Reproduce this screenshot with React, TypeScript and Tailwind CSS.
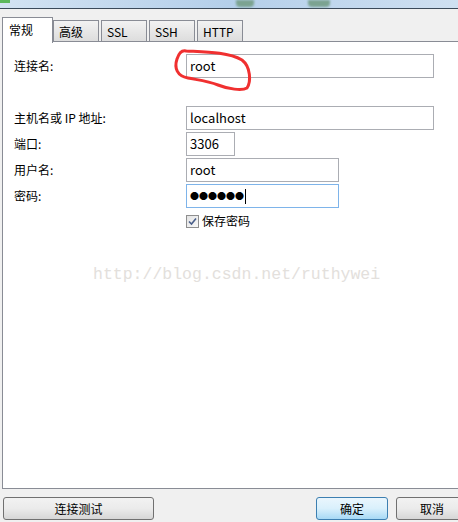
const fieldCls =
  "h-[24px] border border-[#abadb3] bg-white px-[3px] flex items-center text-[13px] text-black";

const Row = ({ label, width, children }: { label: string; width: string; children: React.ReactNode }) => (
  <div className="flex items-center">
    <span className="w-[172px] text-[12px] text-black">{label}</span>
    <div className={fieldCls + " " + width}>{children}</div>
  </div>
);

const Tab = ({ label, active = false }: { label: string; active?: boolean }) =>
  active ? (
    <div className="h-[26px] w-[51px] -mb-px bg-white border border-b-0 border-[#898c95] pl-[6px] pt-[3px] text-[12px] text-black z-10">
      {label}
    </div>
  ) : (
    <div className="h-[22px] w-[46px] mr-[2px] border border-b-0 border-[#898c95] bg-gradient-to-b from-[#f2f2f2] to-[#dcdcdc] pl-[5px] pt-[2px] text-[12px] text-black">
      {label}
    </div>
  );

const Button = ({ label, className = "" }: { label: string; className?: string }) => (
  <div
    className={
      "h-[23px] shrink-0 rounded-[3px] border flex items-center justify-center text-[12px] text-black " + className
    }
  >
    {label}
  </div>
);

export default function App() {
  return (
    <div
      className="relative w-[458px] h-[522px] overflow-hidden bg-[#f0f0f0] flex flex-col"
      style={{ fontFamily: '"Noto Sans CJK SC", "Liberation Sans", sans-serif' }}
    >
      {/* window chrome glimpse */}
      <div className="h-[8px] bg-gradient-to-r from-[#d3e3f2] via-[#b4cfea] to-[#cfe0f1] relative">
        <div className="absolute left-0 top-0 w-[10px] h-[3px] bg-[#5cb85c]" />
        <div className="absolute left-[236px] top-0 w-[18px] h-[7px] rounded-b-[4px] bg-[#7ba391] blur-[1px]" />
        <div className="absolute left-[308px] top-0 w-[22px] h-[7px] rounded-b-[4px] bg-[#7ba391] blur-[1px]" />
      </div>
      <div className="h-px bg-[#3b4a5a]" />

      {/* tabs */}
      <div className="flex items-end pl-[2px] mt-[8px] relative">
        <Tab label="常规" active />
        <Tab label="高级" />
        <Tab label="SSL" />
        <Tab label="SSH" />
        <Tab label="HTTP" />
        <div className="absolute left-[2px] right-0 bottom-0 h-px bg-[#898c95]" />
      </div>

      {/* panel */}
      <div className="ml-[2px] mr-[-4px] h-[447px] bg-white border border-t-0 border-[#898c95] pl-[11px] pt-[12px] flex flex-col">
        <Row label="连接名:" width="w-[248px]">root</Row>

        <div className="mt-[28px] flex flex-col gap-[2px]">
          <Row label="主机名或 IP 地址:" width="w-[248px]">localhost</Row>
          <Row label="端口:" width="w-[49px]">3306</Row>
          <Row label="用户名:" width="w-[153px]">root</Row>
          <div className="flex items-center">
            <span className="w-[172px] text-[12px] text-black">密码:</span>
            <div className="h-[24px] w-[153px] border border-[#7eb4ea] bg-white px-[3px] flex items-center text-black">
              <span className="text-[9px] tracking-[0px]">●●●●●●</span>
              <span className="ml-[1px] w-px h-[15px] bg-black" />
            </div>
          </div>
        </div>

        <div className="flex items-center mt-[4px] ml-[172px]">
          <div className="w-[13px] h-[13px] border border-[#8f8f8f] bg-gradient-to-br from-[#e4e4e4] to-[#f8f8f8] flex items-center justify-center">
            <svg width="9" height="9" viewBox="0 0 9 9">
              <path d="M1 4.5 L3.5 7 L8 1.5" fill="none" stroke="#4a5f8a" strokeWidth="1.6" />
            </svg>
          </div>
          <span className="ml-[3px] text-[12px] text-black">保存密码</span>
        </div>

        <div
          className="mt-[33px] ml-[79px] text-[16.5px] text-[#e3e0dc]"
          style={{ fontFamily: '"Liberation Mono", monospace' }}
        >
          http://blog.csdn.net/ruthywei
        </div>
      </div>

      {/* buttons */}
      <div className="flex items-center mt-[8px] pl-[3px]">
        <Button label="连接测试" className="w-[151px] border-[#707070] bg-gradient-to-b from-[#f2f2f2] via-[#ebebeb] to-[#d6d6d6]" />
        <Button label="确定" className="ml-[162px] w-[72px] border-[#3c7fb1] bg-gradient-to-b from-[#eaf6fd] via-[#d9f0fc] to-[#a7d9f5]" />
        <Button label="取消" className="ml-[8px] w-[72px] border-[#707070] bg-gradient-to-b from-[#f2f2f2] via-[#ebebeb] to-[#d6d6d6]" />
      </div>

      {/* hand-drawn red circle */}
      <svg className="absolute left-0 top-0 pointer-events-none" width="458" height="522">
        <path
          d="M186 51 C205 52 228 52 242 60 C251 67 251 82 247 88 C242 91 228 89 218 85 C208 81 198 80 188 78 C177 76 174 68 177 59 C179 53 182 50 186 51"
          fill="none"
          stroke="#f03030"
          strokeWidth="3"
          strokeLinecap="round"
        />
      </svg>
    </div>
  );
}
